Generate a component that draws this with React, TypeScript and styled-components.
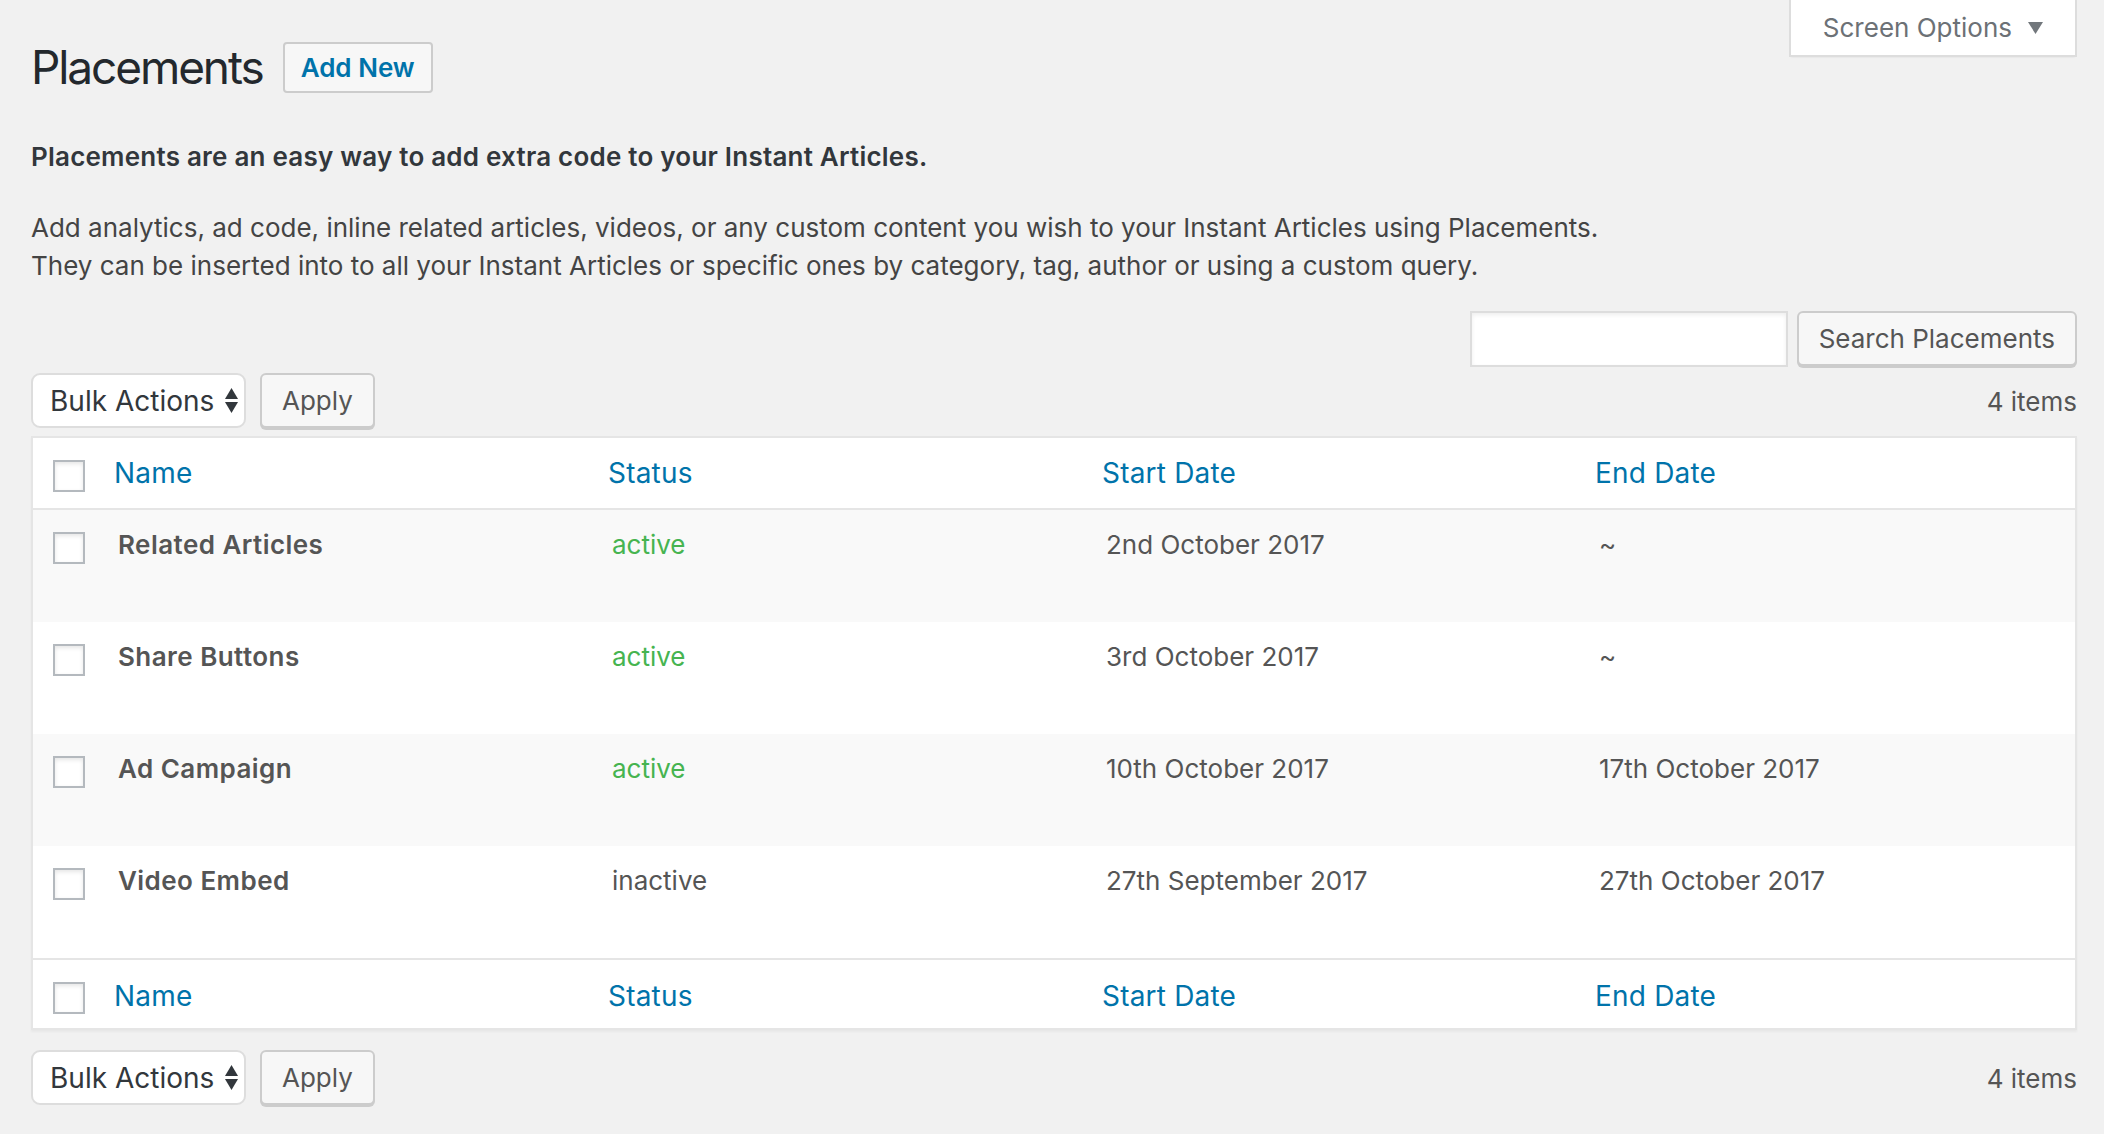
import React from "react";
import styled, { createGlobalStyle } from "styled-components";

const GlobalStyle = createGlobalStyle`
  html, body { margin: 0; padding: 0; }
  body {
    background: #f1f1f1;
    color: #444;
    font-family: Inter, "Noto Sans", sans-serif;
    font-size: 26px;
    line-height: 1.5;
  }
  * { box-sizing: border-box; }
`;

const Page = styled.div`
  padding: 0 27px 0 31px;
  min-height: 1134px;
`;

const ScreenOptions = styled.button`
  float: right;
  display: flex;
  align-items: center;
  gap: 16px;
  height: 57px;
  padding: 0 32px 0 32px;
  background: #fff;
  border: 2px solid #ddd;
  border-top: none;
  box-shadow: 0 2px 2px -2px rgba(0, 0, 0, 0.1);
  color: #6c7176;
  font-family: inherit;
  font-size: 26px;
`;

const TitleRow = styled.div`
  display: flex;
  align-items: center;
  padding-top: 37px;
`;

const Title = styled.h1`
  margin: 0;
  font-size: 46px;
  font-weight: 400;
  line-height: 60px;
  letter-spacing: -2.1px;
  color: #23282d;
`;

const AddNew = styled.a`
  margin-left: 20px;
  height: 51px;
  display: flex;
  align-items: center;
  padding: 0 16px;
  background: #f7f7f7;
  border: 2px solid #ccc;
  border-radius: 4px;
  color: #0073aa;
  font-weight: 600;
  font-size: 26px;
  text-decoration: none;
`;

const Lead = styled.p`
  margin: 40px 0 0;
  font-weight: 600;
  line-height: 39px;
  letter-spacing: 0.22px;
  color: #32373c;
`;

const Description = styled.p`
  margin: 33px 0 0;
  line-height: 38px;
  color: #444;
`;

const SearchRow = styled.div`
  display: flex;
  justify-content: flex-end;
  gap: 9px;
  margin-top: 26px;
  height: 56px;
`;

const SearchInput = styled.input`
  width: 318px;
  height: 56px;
  border: 2px solid #ddd;
  background: #fff;
  box-shadow: inset 0 2px 4px rgba(0, 0, 0, 0.07);
  outline: none;
`;

const Button = styled.button<{ $pad?: number }>`
  height: 55px;
  padding: 0 ${(p) => p.$pad ?? 26}px;
  background: #f7f7f7;
  border: 2px solid #ccc;
  border-radius: 6px;
  box-shadow: 0 2px 0 #ccc;
  color: #555;
  font-family: inherit;
  font-size: 26px;
  line-height: 1;
`;

const TableNav = styled.div<{ $top?: boolean }>`
  display: flex;
  align-items: flex-start;
  gap: 14px;
  height: ${(p) => (p.$top ? 63 : 60)}px;
  margin-top: ${(p) => (p.$top ? 6 : 20)}px;
`;

const Select = styled.div`
  display: flex;
  align-items: center;
  gap: 11px;
  width: 215px;
  height: 55px;
  padding: 0 0 0 17px;
  background: #fff;
  border: 2px solid #ddd;
  border-radius: 9px;
  color: #32373c;
  font-size: 28px;
  white-space: nowrap;
`;

const Count = styled.span<{ $pt: number }>`
  margin-left: auto;
  line-height: 39px;
  padding-top: ${(p) => p.$pt}px;
  color: #555;
`;

const Table = styled.table`
  width: 100%;
  border-collapse: separate;
  border-spacing: 0;
  table-layout: fixed;
  background: #fff;
  border: 2px solid #e5e5e5;
  box-shadow: 0 2px 2px rgba(0, 0, 0, 0.04);
`;

const HeadCell = styled.th<{ $foot?: boolean }>`
  text-align: left;
  font-weight: 400;
  vertical-align: top;
  padding: ${(p) => (p.$foot ? "17px 16px 12px" : "16px 16px 15px")};
  line-height: 39px;
  font-size: 28px;
  letter-spacing: 0.2px;
  ${(p) =>
    p.$foot ? "border-top: 2px solid #e5e5e5;" : "border-bottom: 2px solid #e5e5e5;"}
`;

const HeadLink = styled.a`
  color: #0073aa;
  text-decoration: none;
`;

const CheckCell = styled.td<{ $head?: boolean; $foot?: boolean }>`
  vertical-align: top;
  padding: 22px 0 0 20px;
  ${(p) => (p.$head ? "border-bottom: 2px solid #e5e5e5;" : "")}
  ${(p) => (p.$foot ? "border-top: 2px solid #e5e5e5;" : "")}
`;

const Checkbox = styled.span`
  display: block;
  width: 32px;
  height: 32px;
  background: #fff;
  border: 2px solid #b4b9be;
  box-shadow: inset 0 2px 4px rgba(0, 0, 0, 0.1);
`;

const Row = styled.tr<{ $alt: boolean }>`
  background: ${(p) => (p.$alt ? "#f9f9f9" : "#fff")};
  height: 112px;
`;

const Cell = styled.td`
  vertical-align: top;
  padding: 15px 20px 0;
  line-height: 39px;
  color: #555;
  white-space: nowrap;
`;

const RowTitle = styled.strong`
  font-weight: 600;
  letter-spacing: 0.45px;
  color: #555;
`;

const Status = styled.span<{ $active: boolean }>`
  color: ${(p) => (p.$active ? "#46b450" : "#555")};
`;

const Arrows = () => (
  <svg width="13" height="25" viewBox="0 0 13 25" aria-hidden>
    <path d="M6.5 0 L13 11 L0 11 Z" fill="#32373c" />
    <path d="M0 14 L13 14 L6.5 25 Z" fill="#32373c" />
  </svg>
);

const Caret = () => (
  <svg width="15" height="12" viewBox="0 0 15 12" aria-hidden>
    <path d="M0 0 L15 0 L7.5 12 Z" fill="#72777c" />
  </svg>
);

const rows = [
  { name: "Related Articles", active: true, start: "2nd October 2017", end: "~" },
  { name: "Share Buttons", active: true, start: "3rd October 2017", end: "~" },
  { name: "Ad Campaign", active: true, start: "10th October 2017", end: "17th October 2017" },
  { name: "Video Embed", active: false, start: "27th September 2017", end: "27th October 2017" },
];

const HeaderCells = ({ foot }: { foot?: boolean }) => (
  <tr>
    <CheckCell $head={!foot} $foot={foot}>
      <Checkbox />
    </CheckCell>
    {["Name", "Status", "Start Date", "End Date"].map((h) => (
      <HeadCell key={h} $foot={foot}>
        <HeadLink href="#">{h}</HeadLink>
      </HeadCell>
    ))}
  </tr>
);

const BulkNav = ({ top }: { top?: boolean }) => (
  <TableNav $top={top}>
    <Select>
      Bulk Actions
      <Arrows />
    </Select>
    <Button $pad={20}>Apply</Button>
    <Count $pt={top ? 9 : 9}>4 items</Count>
  </TableNav>
);

export default function App() {
  return (
    <>
      <GlobalStyle />
      <Page>
        <ScreenOptions>
          Screen Options
          <Caret />
        </ScreenOptions>
        <TitleRow>
          <Title>Placements</Title>
          <AddNew href="#">Add New</AddNew>
        </TitleRow>
        <Lead>Placements are an easy way to add extra code to your Instant Articles.</Lead>
        <Description>
          Add analytics, ad code, inline related articles, videos, or any custom content you wish to
          your Instant Articles using Placements.
          <br />
          They can be inserted into to all your Instant Articles or specific ones by category, tag,
          author or using a custom query.
        </Description>
        <SearchRow>
          <SearchInput type="search" />
          <Button $pad={20}>Search Placements</Button>
        </SearchRow>
        <BulkNav top />
        <Table>
          <colgroup>
            <col style={{ width: 65 }} />
            <col style={{ width: 494 }} />
            <col style={{ width: 494 }} />
            <col style={{ width: 493 }} />
            <col />
          </colgroup>
          <thead>
            <HeaderCells />
          </thead>
          <tbody>
            {rows.map((r, i) => (
              <Row key={r.name} $alt={i % 2 === 0}>
                <CheckCell>
                  <Checkbox />
                </CheckCell>
                <Cell>
                  <RowTitle>{r.name}</RowTitle>
                </Cell>
                <Cell>
                  <Status $active={r.active}>{r.active ? "active" : "inactive"}</Status>
                </Cell>
                <Cell>{r.start}</Cell>
                <Cell>{r.end}</Cell>
              </Row>
            ))}
          </tbody>
          <tfoot>
            <HeaderCells foot />
          </tfoot>
        </Table>
        <BulkNav />
      </Page>
    </>
  );
}
